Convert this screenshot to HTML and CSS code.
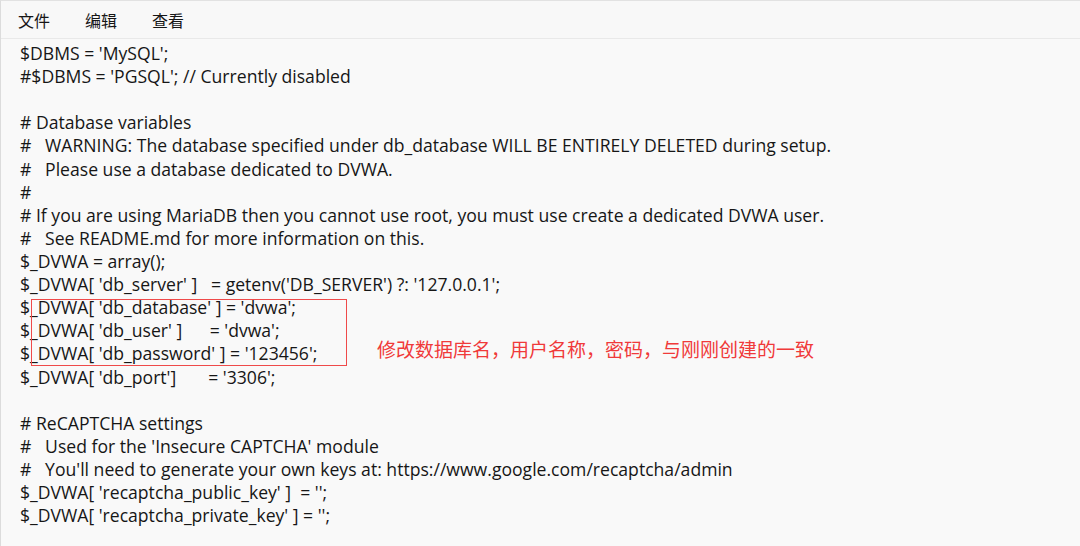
FILE: index.html
```html
<!DOCTYPE html>
<html lang="zh-CN">
<head>
<meta charset="utf-8">
<title>config.inc.php - 记事本</title>
<link rel="stylesheet" href="styles.css">
</head>
<body>
<div class="window">
  <nav class="menubar">
    <span class="menu-item">文件</span>
    <span class="menu-item">编辑</span>
    <span class="menu-item">查看</span>
  </nav>
  <main class="editor">
    <div class="line">$DBMS = 'MySQL';</div>
    <div class="line">#$DBMS = 'PGSQL'; // Currently disabled</div>
    <div class="line"> </div>
    <div class="line"># Database variables</div>
    <div class="line">#   WARNING: The database specified under db_database WILL BE ENTIRELY DELETED during setup.</div>
    <div class="line">#   Please use a database dedicated to DVWA.</div>
    <div class="line">#</div>
    <div class="line"># If you are using MariaDB then you cannot use root, you must use create a dedicated DVWA user.</div>
    <div class="line">#   See README.md for more information on this.</div>
    <div class="line">$_DVWA = array();</div>
    <div class="line">$_DVWA[ 'db_server' ]   = getenv('DB_SERVER') ?: '127.0.0.1';</div>
    <div class="highlight">
      <div class="line">$_DVWA[ 'db_database' ] = 'dvwa';</div>
      <div class="line">$_DVWA[ 'db_user' ]      = 'dvwa';</div>
      <div class="line">$_DVWA[ 'db_password' ] = '123456';</div>
      <span class="box"></span>
      <span class="note">修改数据库名，用户名称，密码，与刚刚创建的一致</span>
    </div>
    <div class="line">$_DVWA[ 'db_port']       = '3306';</div>
    <div class="line"> </div>
    <div class="line"># ReCAPTCHA settings</div>
    <div class="line">#   Used for the 'Insecure CAPTCHA' module</div>
    <div class="line">#   You'll need to generate your own keys at: https://www.google.com/recaptcha/admin</div>
    <div class="line">$_DVWA[ 'recaptcha_public_key' ]  = '';</div>
    <div class="line">$_DVWA[ 'recaptcha_private_key' ] = '';</div>
  </main>
</div>
</body>
</html>
```
FILE: styles.css
```css
html, body {
  margin: 0;
  padding: 0;
  background: #f9f9f9;
}
body {
  width: 1080px;
  height: 546px;
  overflow: hidden;
}
.window {
  height: 546px;
  box-sizing: border-box;
  border-top: 1px solid #e2e2e2;
  border-left: 1px solid #dcdcdc;
  background: #f9f9f9;
  display: flex;
  flex-direction: column;
}
.menubar {
  height: 37px;
  flex: none;
  display: flex;
  align-items: center;
  gap: 35px;
  padding-left: 17px;
  background: #f8f8f8;
  border-bottom: 1px solid #e9e9e9;
  font-family: "Noto Sans CJK SC", "Noto Sans", sans-serif;
  font-size: 16px;
  color: #161616;
}
.menu-item {
  line-height: 20px;
}
.editor {
  padding: 3px 0 0 19px;
  font-family: "Open Sans", "Noto Sans", "Noto Sans CJK SC", sans-serif;
  font-size: 17.6px;
  color: #161616;
}
.line {
  height: 23.12px;
  line-height: 23.12px;
  white-space: pre;
}
.highlight {
  position: relative;
}
.box {
  position: absolute;
  left: 11px;
  top: 3px;
  width: 314px;
  height: 65px;
  border: 1.5px solid #ef4a4a;
}
.note {
  position: absolute;
  left: 357px;
  top: 40px;
  font-family: "Noto Sans CJK SC", sans-serif;
  font-size: 19px;
  line-height: 26px;
  color: #f03a3a;
  white-space: nowrap;
}
```
